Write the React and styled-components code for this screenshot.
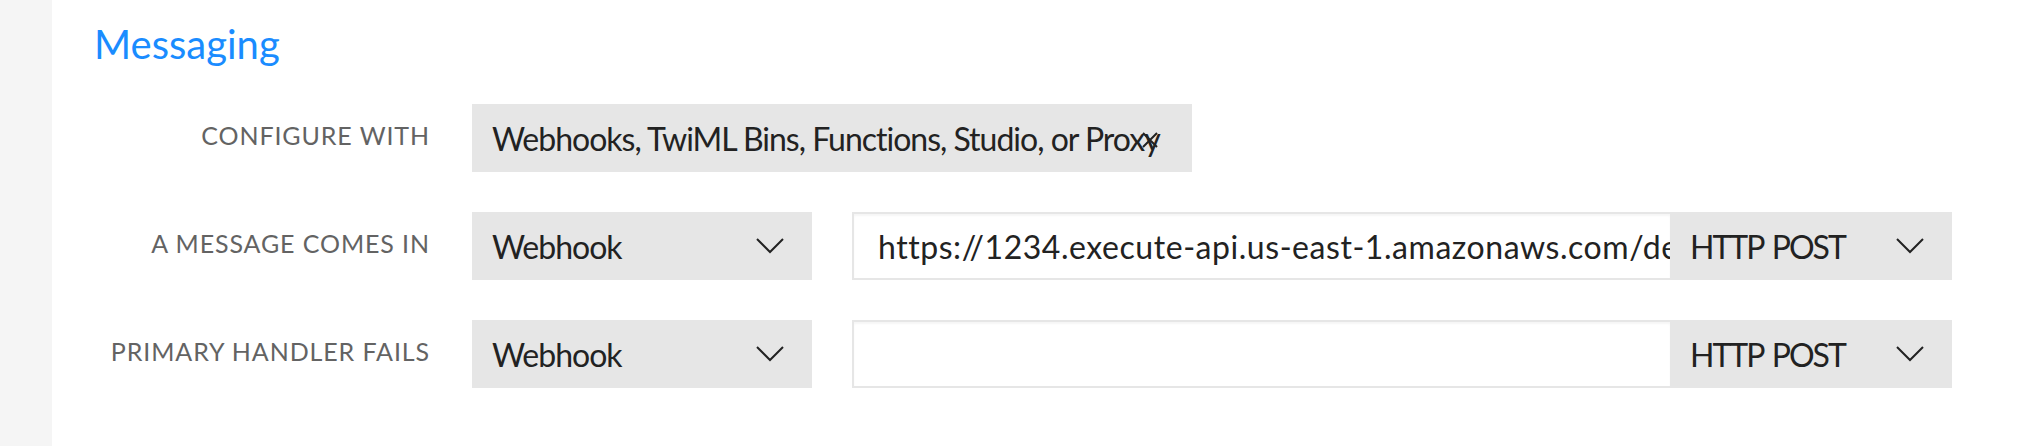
import React from "react";
import styled, { createGlobalStyle } from "styled-components";

const Global = createGlobalStyle`
  html, body { margin: 0; padding: 0; background: #ffffff; }
  body { font-family: Lato, "Open Sans", sans-serif; }
  #root { height: 446px; }
`;

const Page = styled.div`
  display: flex;
  height: 446px;
  overflow: hidden;
`;

const Sidebar = styled.aside`
  width: 52px;
  flex: none;
  background: #f5f5f5;
`;

const Content = styled.main`
  flex: 1;
  padding: 20px 0 0 42px;
  display: flex;
  flex-direction: column;
`;

const Title = styled.h2`
  margin: 0;
  font-family: Lato, sans-serif;
  font-weight: 400;
  font-size: 40px;
  line-height: 48px;
  color: #1a8cff;
`;

const Form = styled.div`
  margin-top: 36px;
  display: flex;
  flex-direction: column;
  gap: 40px;
`;

const Row = styled.div`
  display: flex;
  align-items: center;
`;

const Label = styled.div`
  width: 336px;
  margin-right: 42px;
  text-align: right;
  font-family: Lato, sans-serif;
  font-size: 25px;
  letter-spacing: 0.9px;
  text-transform: uppercase;
  color: #636363;
  padding-bottom: 6px;
  white-space: nowrap;
`;

const Field = styled.div`
  position: relative;
  box-sizing: border-box;
  width: ${(p) => p.$width}px;
  height: 68px;
  background: #e6e6e6;
  display: flex;
  align-items: center;
  padding: 0 28px 0 20px;
  font-family: Lato, sans-serif;
  font-size: 32px;
  letter-spacing: ${(p) => (p.$caps ? "-2px" : "-1px")};
  word-spacing: ${(p) => (p.$caps ? "3px" : "0")};
  color: #222;
  white-space: nowrap;
  overflow: hidden;
  flex: none;
`;

const Value = styled.span`
  flex: 1;
`;

const Clear = styled.span`
  position: absolute;
  right: 34px;
  top: 28px;
  display: flex;
`;

const Group = styled.div`
  display: flex;
  margin-left: 40px;
`;

const UrlInput = styled.div`
  box-sizing: border-box;
  width: 818px;
  height: 68px;
  background: #fff;
  border: 2px solid #e6e6e6;
  border-right: none;
  box-shadow: inset 0 2px 2px rgba(0, 0, 0, 0.04);
  display: flex;
  align-items: center;
  padding: 0 0 0 24px;
  font-family: Lato, sans-serif;
  font-size: 32px;
  letter-spacing: 0.55px;
  color: #222;
  white-space: nowrap;
  overflow: hidden;
  flex: none;
`;

const Chevron = () => (
  <svg width="28" height="16" viewBox="0 0 28 16" fill="none">
    <path d="M1 1 L14 14 L27 1" stroke="#222" strokeWidth="2" />
  </svg>
);

const Cross = () => (
  <svg width="16" height="16" viewBox="0 0 16 16" fill="none">
    <path d="M1 1 L15 15 M15 1 L1 15" stroke="#222" strokeWidth="2" />
  </svg>
);

const Select = ({ width, caps, children }) => (
  <Field $width={width} $caps={caps}>
    <Value>{children}</Value>
    <Chevron />
  </Field>
);

export default function App() {
  return (
    <>
      <Global />
      <Page>
        <Sidebar />
        <Content>
          <Title>Messaging</Title>
          <Form>
            <Row>
              <Label>Configure with</Label>
              <Field $width={720}>
                <Value>Webhooks, TwiML Bins, Functions, Studio, or Proxy</Value>
                <Clear>
                  <Cross />
                </Clear>
              </Field>
            </Row>
            <Row>
              <Label>A message comes in</Label>
              <Select width={340}>Webhook</Select>
              <Group>
                <UrlInput>https://1234.execute-api.us-east-1.amazonaws.com/default/handler</UrlInput>
                <Select width={282} caps>HTTP POST</Select>
              </Group>
            </Row>
            <Row>
              <Label>Primary handler fails</Label>
              <Select width={340}>Webhook</Select>
              <Group>
                <UrlInput />
                <Select width={282} caps>HTTP POST</Select>
              </Group>
            </Row>
          </Form>
        </Content>
      </Page>
    </>
  );
}
